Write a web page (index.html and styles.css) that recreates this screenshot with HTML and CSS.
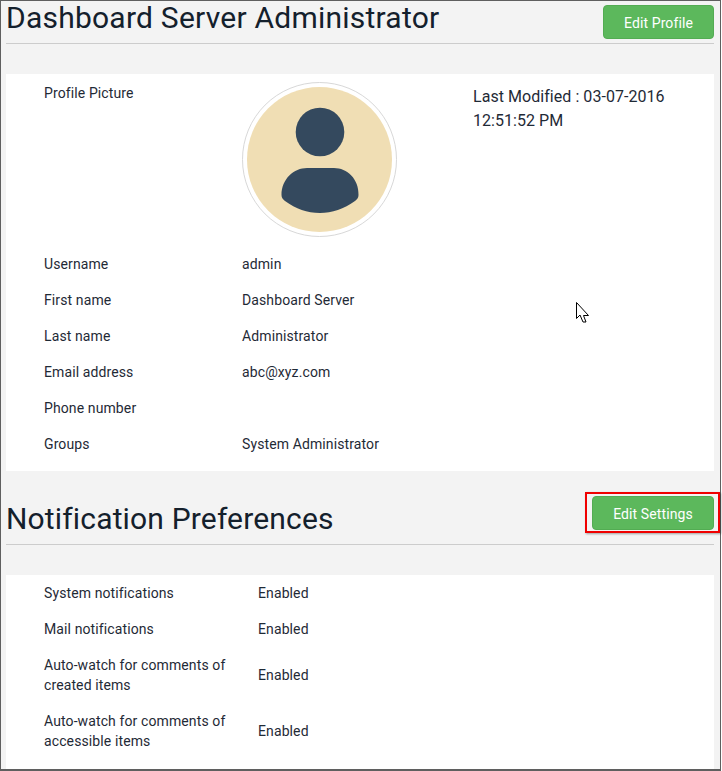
FILE: index.html
```html
<!DOCTYPE html>
<html lang="en">
<head>
<meta charset="utf-8">
<title>Profile</title>
<link rel="stylesheet" href="styles.css">
</head>
<body>
<div class="frame">
  <header class="head head-profile">
    <h1>Dashboard Server Administrator</h1>
    <button class="btn btn-profile">Edit Profile</button>
  </header>
  <section class="panel panel-profile">
    <div class="pic-row">
      <div class="label pic-label">Profile Picture</div>
      <div class="avatar">
        <svg viewBox="0 0 145 145" width="145" height="145" aria-hidden="true">
          <circle cx="72.5" cy="72.5" r="72.5" fill="#f0deb4"/>
          <circle cx="73" cy="45" r="24.3" fill="#34495e"/>
          <path d="M34.500 108C34.500 92 47 81 60 81H87C100 81 112 92 111.500 108C111.500 111 110 112.500 108 114C97 122 85 126 73 126C60 126 49 122 38 114C36 112.500 34.500 111 34.500 108Z" fill="#34495e"/>
        </svg>
      </div>
      <div class="modified">Last Modified : 03-07-2016 12:51:52 PM</div>
    </div>
    <dl class="rows">
      <div class="row"><dt class="label">Username</dt><dd class="value">admin</dd></div>
      <div class="row"><dt class="label">First name</dt><dd class="value">Dashboard Server</dd></div>
      <div class="row"><dt class="label">Last name</dt><dd class="value">Administrator</dd></div>
      <div class="row"><dt class="label">Email address</dt><dd class="value">abc@xyz.com</dd></div>
      <div class="row"><dt class="label">Phone number</dt><dd class="value"></dd></div>
      <div class="row"><dt class="label">Groups</dt><dd class="value">System Administrator</dd></div>
    </dl>
  </section>
  <header class="head head-notify">
    <h1>Notification Preferences</h1>
    <div class="highlight"><button class="btn btn-settings">Edit Settings</button></div>
  </header>
  <section class="panel panel-notify">
    <div class="nrow"><div class="label">System notifications</div><div class="value">Enabled</div></div>
    <div class="nrow"><div class="label">Mail notifications</div><div class="value">Enabled</div></div>
    <div class="nrow tall"><div class="label">Auto-watch for comments of created items</div><div class="value">Enabled</div></div>
    <div class="nrow tall"><div class="label">Auto-watch for comments of accessible items</div><div class="value">Enabled</div></div>
  </section>
  <svg class="cursor" viewBox="0 0 13 22" width="13" height="22" aria-hidden="true">
    <path d="M.5.5V16.500L4 13L7 20H10L7.500 13.500H12.500Z" fill="#fff" stroke="#000" stroke-width="1"/>
  </svg>
</div>
</body>
</html>
```
FILE: styles.css
```css
* { box-sizing: border-box; }
html, body { margin: 0; padding: 0; }
body {
  width: 722px;
  height: 771px;
  overflow: hidden;
  background: #fff;
  font-family: Roboto, "Liberation Sans", sans-serif;
  color: #1f2a36;
}
.frame {
  position: relative;
  width: 721px;
  height: 771px;
  padding: 0 6px 0 5px;
  background: #f3f3f3;
  border: 1px solid #5f5f5f;
  border-width: 1px 1px 2px 1px;
}
.head {
  display: flex;
  justify-content: space-between;
  border-bottom: 1px solid #cccccc;
}
.head-profile { height: 43px; align-items: flex-start; padding-top: 4px; }
.head-notify { height: 74px; align-items: flex-start; padding-top: 21px; }
h1 {
  margin: 0;
  font-weight: 400;
  font-size: 30px;
  line-height: 36px;
  color: #14202c;
}
.head-profile h1 { margin: -5px 0 0; letter-spacing: .23px; }
.head-notify h1 { margin: 9px 0 0; letter-spacing: .16px; }
.btn {
  display: block;
  height: 34px;
  border: 1px solid #53ac53;
  border-radius: 4px;
  background: #5cb85c;
  color: #fff;
  font-family: inherit;
  font-size: 14px;
  letter-spacing: .1px;
  padding: 2px 0 0;
}
.btn-profile { width: 111px; }
.btn-settings { width: 122px; }
.highlight {
  margin-right: -6px;
  width: 135px;
  height: 41px;
  padding: 2px 4px 2px 5px;
  border: 2px solid #f00000;
  box-shadow: 1px 1px 2px rgba(0,0,0,.35);
  display: flex;
  align-items: center;
  justify-content: flex-start;
}
.panel { background: #fff; }
.panel-profile { margin-top: 30px; height: 397px; padding-top: 8px; }
.panel-notify { margin-top: 30px; height: 194px; }
.pic-row {
  display: grid;
  grid-template-columns: 198px 231px 1fr;
  padding-left: 38px;
  height: 155px;
}
.label, .value { font-size: 14px; line-height: 20px; letter-spacing: .11px; color: #1f2a36; }
.pic-label { margin-top: 1px; }
.avatar {
  width: 155px;
  height: 155px;
  padding: 4px;
  border: 1px solid #d8d8d8;
  border-radius: 50%;
}
.avatar svg { display: block; }
.modified {
  font-size: 16px;
  line-height: 24px;
  letter-spacing: .05px;
  width: 215px;
  margin-top: 3px;
  color: #1f2a36;
}
.rows { margin: 9px 0 0; }
.row {
  display: grid;
  grid-template-columns: 198px 1fr;
  padding-left: 38px;
  height: 36px;
  align-items: center;
}
dd { margin: 0; }
.nrow {
  display: grid;
  grid-template-columns: 214px 1fr;
  padding-left: 38px;
  height: 36px;
  align-items: center;
}
.nrow.tall { height: 56px; }
.nrow .label { width: 190px; }
.cursor { position: absolute; left: 575px; top: 301px; }
```
